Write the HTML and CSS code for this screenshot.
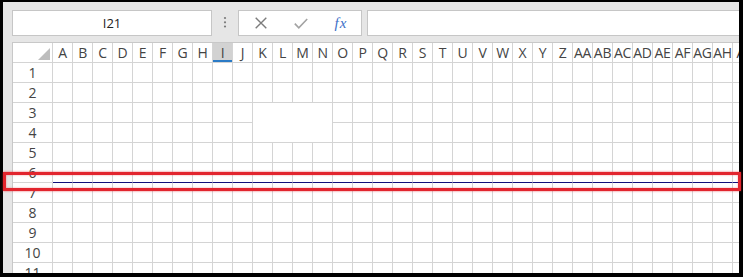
FILE: index.html
```html
<!DOCTYPE html>
<html>
<head>
<meta charset="utf-8">
<link rel="stylesheet" href="styles.css">
</head>
<body>
<div class="frame">
  <div class="toolbar">
    <div class="namebox">I21</div>
    <div class="dots">
      <svg width="4" height="14" viewBox="0 0 4 14"><circle cx="2" cy="2" r="1.1"/><circle cx="2" cy="6.3" r="1.1"/><circle cx="2" cy="10.5" r="1.1"/></svg>
    </div>
    <div class="fbtns">
      <span class="fbtn"><svg class="ico-x" width="12" height="12" viewBox="0 0 12 12"><path d="M0.7 0.7 L11.3 11.3 M11.3 0.7 L0.7 11.3"/></svg></span>
      <span class="fbtn"><svg class="ico-check" width="14" height="11" viewBox="0 0 14 11"><path d="M0.8 5.6 L4.8 9.8 L13.2 1"/></svg></span>
      <span class="fbtn fx">fx</span>
    </div>
    <div class="fbar"></div>
  </div>

  <div class="sheet">
    <div class="corner"></div>
    <div class="ch">A</div><div class="ch">B</div><div class="ch">C</div><div class="ch">D</div><div class="ch">E</div>
    <div class="ch">F</div><div class="ch">G</div><div class="ch">H</div><div class="ch sel">I</div><div class="ch">J</div>
    <div class="ch">K</div><div class="ch">L</div><div class="ch">M</div><div class="ch">N</div><div class="ch">O</div>
    <div class="ch">P</div><div class="ch">Q</div><div class="ch">R</div><div class="ch">S</div><div class="ch">T</div>
    <div class="ch">U</div><div class="ch">V</div><div class="ch">W</div><div class="ch">X</div><div class="ch">Y</div>
    <div class="ch">Z</div><div class="ch">AA</div><div class="ch">AB</div><div class="ch">AC</div><div class="ch">AD</div>
    <div class="ch">AE</div><div class="ch">AF</div><div class="ch">AG</div><div class="ch">AH</div><div class="ch">AI</div>

    <div class="rh">1</div>
    <div class="c"></div><div class="c"></div><div class="c"></div><div class="c"></div><div class="c"></div>
    <div class="c"></div><div class="c"></div><div class="c"></div><div class="c"></div><div class="c"></div>
    <div class="c"></div><div class="c"></div><div class="c"></div><div class="c"></div><div class="c"></div>
    <div class="c"></div><div class="c"></div><div class="c"></div><div class="c"></div><div class="c"></div>
    <div class="c"></div><div class="c"></div><div class="c"></div><div class="c"></div><div class="c"></div>
    <div class="c"></div><div class="c"></div><div class="c"></div><div class="c"></div><div class="c"></div>
    <div class="c"></div><div class="c"></div><div class="c"></div><div class="c"></div><div class="c"></div>

    <div class="rh">2</div>
    <div class="c"></div><div class="c"></div><div class="c"></div><div class="c"></div><div class="c"></div>
    <div class="c"></div><div class="c"></div><div class="c"></div><div class="c"></div><div class="c"></div>
    <div class="c"></div><div class="c"></div><div class="c"></div><div class="c"></div><div class="c"></div>
    <div class="c"></div><div class="c"></div><div class="c"></div><div class="c"></div><div class="c"></div>
    <div class="c"></div><div class="c"></div><div class="c"></div><div class="c"></div><div class="c"></div>
    <div class="c"></div><div class="c"></div><div class="c"></div><div class="c"></div><div class="c"></div>
    <div class="c"></div><div class="c"></div><div class="c"></div><div class="c"></div><div class="c"></div>

    <div class="rh">3</div>
    <div class="c"></div><div class="c"></div><div class="c"></div><div class="c"></div><div class="c"></div>
    <div class="c"></div><div class="c"></div><div class="c"></div><div class="c"></div><div class="c"></div>
    <div class="c merged"></div>
    <div class="c"></div>
    <div class="c"></div><div class="c"></div><div class="c"></div><div class="c"></div><div class="c"></div>
    <div class="c"></div><div class="c"></div><div class="c"></div><div class="c"></div><div class="c"></div>
    <div class="c"></div><div class="c"></div><div class="c"></div><div class="c"></div><div class="c"></div>
    <div class="c"></div><div class="c"></div><div class="c"></div><div class="c"></div><div class="c"></div>

    <div class="rh">4</div>
    <div class="c"></div><div class="c"></div><div class="c"></div><div class="c"></div><div class="c"></div>
    <div class="c"></div><div class="c"></div><div class="c"></div><div class="c"></div><div class="c"></div>
    <div class="c"></div>
    <div class="c"></div><div class="c"></div><div class="c"></div><div class="c"></div><div class="c"></div>
    <div class="c"></div><div class="c"></div><div class="c"></div><div class="c"></div><div class="c"></div>
    <div class="c"></div><div class="c"></div><div class="c"></div><div class="c"></div><div class="c"></div>
    <div class="c"></div><div class="c"></div><div class="c"></div><div class="c"></div><div class="c"></div>

    <div class="rh">5</div>
    <div class="c"></div><div class="c"></div><div class="c"></div><div class="c"></div><div class="c"></div>
    <div class="c"></div><div class="c"></div><div class="c"></div><div class="c"></div><div class="c"></div>
    <div class="c"></div><div class="c"></div><div class="c"></div><div class="c"></div><div class="c"></div>
    <div class="c"></div><div class="c"></div><div class="c"></div><div class="c"></div><div class="c"></div>
    <div class="c"></div><div class="c"></div><div class="c"></div><div class="c"></div><div class="c"></div>
    <div class="c"></div><div class="c"></div><div class="c"></div><div class="c"></div><div class="c"></div>
    <div class="c"></div><div class="c"></div><div class="c"></div><div class="c"></div><div class="c"></div>

    <div class="rh">6</div>
    <div class="c r6"></div><div class="c r6"></div><div class="c r6"></div><div class="c r6"></div><div class="c r6"></div>
    <div class="c r6"></div><div class="c r6"></div><div class="c r6"></div><div class="c r6"></div><div class="c r6"></div>
    <div class="c r6"></div><div class="c r6"></div><div class="c r6"></div><div class="c r6"></div><div class="c r6"></div>
    <div class="c r6"></div><div class="c r6"></div><div class="c r6"></div><div class="c r6"></div><div class="c r6"></div>
    <div class="c r6"></div><div class="c r6"></div><div class="c r6"></div><div class="c r6"></div><div class="c r6"></div>
    <div class="c r6"></div><div class="c r6"></div><div class="c r6"></div><div class="c r6"></div><div class="c r6"></div>
    <div class="c r6"></div><div class="c r6"></div><div class="c r6"></div><div class="c r6"></div><div class="c r6"></div>

    <div class="rh">7</div>
    <div class="c"></div><div class="c"></div><div class="c"></div><div class="c"></div><div class="c"></div>
    <div class="c"></div><div class="c"></div><div class="c"></div><div class="c"></div><div class="c"></div>
    <div class="c"></div><div class="c"></div><div class="c"></div><div class="c"></div><div class="c"></div>
    <div class="c"></div><div class="c"></div><div class="c"></div><div class="c"></div><div class="c"></div>
    <div class="c"></div><div class="c"></div><div class="c"></div><div class="c"></div><div class="c"></div>
    <div class="c"></div><div class="c"></div><div class="c"></div><div class="c"></div><div class="c"></div>
    <div class="c"></div><div class="c"></div><div class="c"></div><div class="c"></div><div class="c"></div>

    <div class="rh">8</div>
    <div class="c"></div><div class="c"></div><div class="c"></div><div class="c"></div><div class="c"></div>
    <div class="c"></div><div class="c"></div><div class="c"></div><div class="c"></div><div class="c"></div>
    <div class="c"></div><div class="c"></div><div class="c"></div><div class="c"></div><div class="c"></div>
    <div class="c"></div><div class="c"></div><div class="c"></div><div class="c"></div><div class="c"></div>
    <div class="c"></div><div class="c"></div><div class="c"></div><div class="c"></div><div class="c"></div>
    <div class="c"></div><div class="c"></div><div class="c"></div><div class="c"></div><div class="c"></div>
    <div class="c"></div><div class="c"></div><div class="c"></div><div class="c"></div><div class="c"></div>

    <div class="rh">9</div>
    <div class="c"></div><div class="c"></div><div class="c"></div><div class="c"></div><div class="c"></div>
    <div class="c"></div><div class="c"></div><div class="c"></div><div class="c"></div><div class="c"></div>
    <div class="c"></div><div class="c"></div><div class="c"></div><div class="c"></div><div class="c"></div>
    <div class="c"></div><div class="c"></div><div class="c"></div><div class="c"></div><div class="c"></div>
    <div class="c"></div><div class="c"></div><div class="c"></div><div class="c"></div><div class="c"></div>
    <div class="c"></div><div class="c"></div><div class="c"></div><div class="c"></div><div class="c"></div>
    <div class="c"></div><div class="c"></div><div class="c"></div><div class="c"></div><div class="c"></div>

    <div class="rh">10</div>
    <div class="c"></div><div class="c"></div><div class="c"></div><div class="c"></div><div class="c"></div>
    <div class="c"></div><div class="c"></div><div class="c"></div><div class="c"></div><div class="c"></div>
    <div class="c"></div><div class="c"></div><div class="c"></div><div class="c"></div><div class="c"></div>
    <div class="c"></div><div class="c"></div><div class="c"></div><div class="c"></div><div class="c"></div>
    <div class="c"></div><div class="c"></div><div class="c"></div><div class="c"></div><div class="c"></div>
    <div class="c"></div><div class="c"></div><div class="c"></div><div class="c"></div><div class="c"></div>
    <div class="c"></div><div class="c"></div><div class="c"></div><div class="c"></div><div class="c"></div>

    <div class="rh">11</div>
    <div class="c"></div><div class="c"></div><div class="c"></div><div class="c"></div><div class="c"></div>
    <div class="c"></div><div class="c"></div><div class="c"></div><div class="c"></div><div class="c"></div>
    <div class="c"></div><div class="c"></div><div class="c"></div><div class="c"></div><div class="c"></div>
    <div class="c"></div><div class="c"></div><div class="c"></div><div class="c"></div><div class="c"></div>
    <div class="c"></div><div class="c"></div><div class="c"></div><div class="c"></div><div class="c"></div>
    <div class="c"></div><div class="c"></div><div class="c"></div><div class="c"></div><div class="c"></div>
    <div class="c"></div><div class="c"></div><div class="c"></div><div class="c"></div><div class="c"></div>
  </div>
</div>
<div class="highlight"></div>
</body>
</html>
```

FILE: styles.css
```css
html, body {
  margin: 0;
  padding: 0;
}
body {
  position: relative;
  background: #000;
  width: 743px;
  height: 277px;
  overflow: hidden;
  font-family: "Open Sans", "Noto Sans", sans-serif;
  color: #333;
}
.frame {
  margin: 2px 4px 0 3px;
  width: 736px;
  height: 271px;
  background: #e6e6e6;
  overflow: hidden;
}
.toolbar {
  display: flex;
  align-items: flex-start;
  height: 40px;
  padding: 8px 0 0 9px;
  box-sizing: border-box;
}
.namebox {
  flex: none;
  width: 200px;
  height: 26px;
  box-sizing: border-box;
  background: #fff;
  border: 1px solid #c6c6c6;
  display: flex;
  align-items: center;
  justify-content: center;
  font-size: 13px;
  color: #222;
}
.dots {
  flex: none;
  width: 26px;
  height: 26px;
  display: flex;
  align-items: center;
  justify-content: center;
}
.dots svg {
  fill: #7a7a7a;
}
.fbtns {
  flex: none;
  width: 124px;
  height: 26px;
  box-sizing: border-box;
  background: #fff;
  border: 1px solid #c6c6c6;
  display: flex;
  align-items: center;
  padding-left: 2px;
}
.fbtn {
  width: 40px;
  height: 24px;
  display: flex;
  align-items: center;
  justify-content: center;
}
.ico-x path {
  stroke: #7c7c7c;
  stroke-width: 1.4;
  fill: none;
}
.ico-check path {
  stroke: #a3a3a3;
  stroke-width: 1.6;
  fill: none;
}
.fx {
  font-family: "Liberation Serif", serif;
  font-style: italic;
  font-size: 15px;
  color: #3c70c8;
  letter-spacing: 1px;
}
.fbar {
  flex: none;
  width: 400px;
  height: 26px;
  margin-left: 5px;
  box-sizing: border-box;
  background: #fff;
  border: 1px solid #c6c6c6;
}
.sheet {
  display: grid;
  grid-template-columns: 40px repeat(35, 20px);
  grid-auto-rows: 20px;
  width: max-content;
  margin-left: 9px;
  border-top: 1px solid #c8c8c8;
  border-left: 1px solid #c8c8c8;
  background: #fff;
}
.sheet > div {
  box-sizing: border-box;
  border-right: 1px solid #d4d4d4;
  border-bottom: 1px solid #d4d4d4;
  background: #fff;
}
.corner {
  position: relative;
}
.corner::after {
  content: "";
  position: absolute;
  right: 2px;
  bottom: 2px;
  width: 12px;
  height: 12px;
  background: #bdbdbd;
  clip-path: polygon(100% 0, 100% 100%, 0 100%);
}
.ch, .rh {
  display: flex;
  align-items: center;
  justify-content: center;
  overflow: hidden;
  white-space: nowrap;
  font-size: 14px;
  color: #444;
  line-height: 1;
}
.ch {
  letter-spacing: -0.3px;
}
.sheet > .ch.sel {
  background: #d2d2d2;
  box-shadow: inset 0 -2px 0 #2b7bc6;
}
.sheet > .merged {
  grid-column: span 4;
  grid-row: span 2;
}
.sheet > .r6 {
  border-bottom-color: #10107a;
}
.highlight {
  position: absolute;
  left: 3px;
  top: 172px;
  width: 738px;
  height: 19px;
  box-sizing: border-box;
  border: 3px solid #e2252e;
  box-shadow: 0 0 2px rgba(226, 37, 46, 0.7), inset 0 0 2px rgba(226, 37, 46, 0.5);
}
```
